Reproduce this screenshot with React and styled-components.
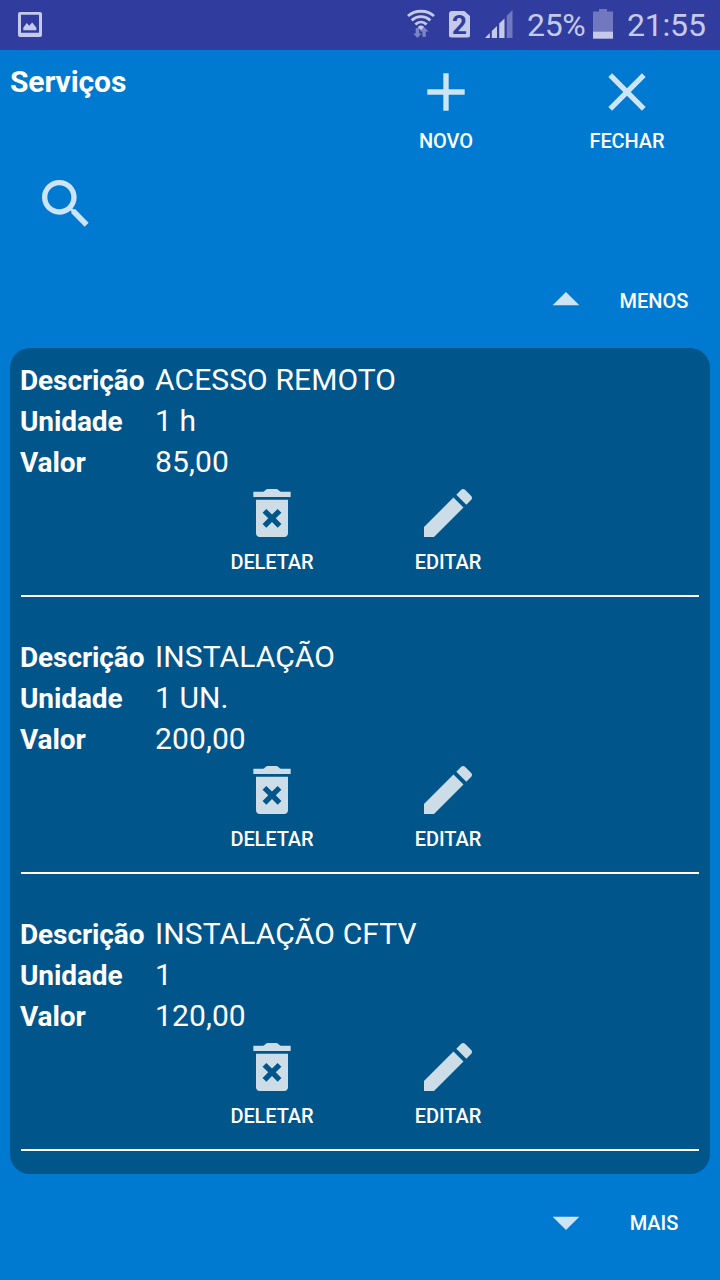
import React from "react";
import styled, { createGlobalStyle } from "styled-components";

const services = [
  { description: "ACESSO REMOTO", unit: "1 h", price: "85,00" },
  { description: "INSTALAÇÃO", unit: "1 UN.", price: "200,00" },
  { description: "INSTALAÇÃO CFTV", unit: "1", price: "120,00" },
];

const paths = {
  add: "M19 13h-6v6h-2v-6H5v-2h6V5h2v6h6z",
  close:
    "M19 6.41L17.59 5 12 10.59 6.41 5 5 6.41 10.59 12 5 17.59 6.41 19 12 13.41 17.59 19 19 17.59 13.41 12z",
  search:
    "M15.5 14h-.79l-.28-.27C15.41 12.59 16 11.11 16 9.5 16 5.91 13.09 3 9.5 3S3 5.91 3 9.5 5.91 16 9.5 16c1.61 0 3.09-.59 4.23-1.57l.27.28v.79l5 4.99L20.49 19l-4.99-5zm-6 0C7.01 14 5 11.99 5 9.5S7.01 5 9.5 5 14 7.01 14 9.5 11.99 14 9.5 14z",
  up: "M7 14l5-5 5 5z",
  down: "M7 10l5 5 5-5z",
  trash:
    "M5 4h3.7c.6 0 .9-1 1.6-1h3.4c.7 0 1 1 1.6 1H19v2H5zM6 7h12v12.6c0 .8-.6 1.4-1.4 1.4H7.4c-.8 0-1.4-.6-1.4-1.4zM8.46 11.88L10.59 14l-2.12 2.12 1.41 1.41L12 15.41l2.12 2.12 1.41-1.41L13.41 14l2.12-2.12-1.41-1.41L12 12.59l-2.13-2.12z",
  edit: "M3 17.25V21h3.75L17.81 9.94l-3.75-3.75L3 17.25zM20.71 7.04c.39-.39.39-1.02 0-1.41l-2.34-2.34c-.39-.39-1.02-.39-1.41 0l-1.83 1.83 3.75 3.75 1.83-1.83z",
};

function Icon({ name }) {
  return (
    <IconSvg viewBox="0 0 24 24">
      <path fillRule="evenodd" d={paths[name]} />
    </IconSvg>
  );
}

function Action({ icon, children }) {
  return (
    <ActionButton>
      <Icon name={icon} />
      <Caption>{children}</Caption>
    </ActionButton>
  );
}

function StatusBar() {
  return (
    <Status>
      <StatusSvg width="24" height="27" viewBox="0 0 24 27">
        <path
          fillRule="evenodd"
          d="M2 0h20a2 2 0 0 1 2 2v21a2 2 0 0 1-2 2H2a2 2 0 0 1-2-2V2a2 2 0 0 1 2-2zM3 2.7v18h18v-18zM5.3 18.2v-2.4L8.8 11l2.4 2.8 3-3.2 4.2 5.2v2.4z"
        />
      </StatusSvg>
      <StatusRight>
        <StatusSvg width="28" height="30" viewBox="0 0 28 30">
          <g fill="none" stroke="#c6caea" strokeWidth="2.9">
            <path d="M1 7C8 .6 20 .6 27 7" />
            <path d="M4.7 11.4c5.4-5 13.2-5 18.6 0" />
            <path d="M8.4 15.5c3.3-3.2 7.9-3.2 11.2 0" />
          </g>
          <path d="M10.8 18q3.2-2.8 6.4 0L14 21.4z" />
          <path
            fill="#7d84c6"
            d="M8.7 19h3.4v5.4h2.5L10.4 29l-4.2-4.6h2.5zM15.4 27.8v-5.2h-2.5l4.2-4.4 4.6 4.4h-2.9v5.2z"
          />
        </StatusSvg>
        <SimBadge>2</SimBadge>
        <StatusSvg width="28" height="28" viewBox="0 0 28 28">
          <path d="M0 28l4.8-5V28zM6.8 21l5.2-5V28H6.8zM14.2 13.4l5.3-5V28h-5.3z" />
          <path fill="#7178bf" d="M21.8 5.8L27.5 0v28h-5.7z" />
        </StatusSvg>
        <Percent>25%</Percent>
        <StatusSvg width="20" height="30" viewBox="0 0 20 30">
          <path fill="#7178bf" d="M0 2.5h6V0h8v2.5h6V23H0z" />
          <path d="M0 22.7h20V29.7H0z" />
        </StatusSvg>
        <Clock>21:55</Clock>
      </StatusRight>
    </Status>
  );
}

function App() {
  return (
    <Screen>
      <GlobalStyle />
      <StatusBar />
      <Header>
        <Title>Serviços</Title>
        <HeaderActions>
          <Action icon="add">NOVO</Action>
          <Action icon="close">FECHAR</Action>
        </HeaderActions>
      </Header>
      <SearchButton>
        <Icon name="search" />
      </SearchButton>
      <Pager>
        <Icon name="up" />
        <PagerText>MENOS</PagerText>
      </Pager>
      <Panel>
        {services.map((service) => (
          <Service key={service.description}>
            <Label>Descrição</Label>
            <Value>{service.description}</Value>
            <Label>Unidade</Label>
            <Value>{service.unit}</Value>
            <Label>Valor</Label>
            <Value>{service.price}</Value>
            <ServiceActions>
              <Action icon="trash">DELETAR</Action>
              <Action icon="edit">EDITAR</Action>
            </ServiceActions>
          </Service>
        ))}
      </Panel>
      <Pager $bottom>
        <Icon name="down" />
        <PagerText>MAIS</PagerText>
      </Pager>
    </Screen>
  );
}

export default App;

const GlobalStyle = createGlobalStyle`
  * {
    box-sizing: border-box;
  }

  body {
    margin: 0;
    background-color: #007ad0;
    font-family: Roboto, sans-serif;
  }
`;

const Screen = styled.div`
  width: 720px;
  height: 1280px;
  overflow: hidden;
  color: white;
  background-color: #007ad0;
`;

const Status = styled.div`
  height: 50px;
  display: flex;
  justify-content: space-between;
  padding: 0 14px 0 18px;
  align-items: center;
  color: #c6caea;
  background-color: #303d9f;
`;

const StatusSvg = styled.svg`
  display: block;
  flex: none;
  fill: #c6caea;
`;

const StatusRight = styled.div`
  display: flex;
  align-items: center;
  height: 48px;
  margin-bottom: 2px;
`;

const SimBadge = styled.div`
  width: 21px;
  height: 27px;
  margin: 0 15px 0 14px;
  border-radius: 3px;
  clip-path: polygon(0 0, 70% 0, 100% 20%, 100% 100%, 0 100%);
  background-color: #c6caea;
  color: #303d9f;
  font-size: 26px;
  font-weight: bold;
  line-height: 28px;
  text-align: center;
`;

const Percent = styled.div`
  width: 59px;
  margin: 2px 7px 0 14px;
  font-size: 32px;
  letter-spacing: -0.3px;
  white-space: nowrap;
`;

const Clock = styled.div`
  width: 79px;
  margin: 2px 0 0 14px;
  font-size: 32px;
  letter-spacing: -0.2px;
  white-space: nowrap;
`;

const Header = styled.header`
  height: 122px;
  display: flex;
  justify-content: space-between;
  padding: 10px 13px 0 10px;
`;

const Title = styled.h1`
  margin: 4px 0 0;
  font-size: 30px;
  font-weight: bold;
  letter-spacing: -0.1px;
  line-height: 36px;
`;

const HeaderActions = styled.div`
  display: flex;
  gap: 21px;
`;

const IconSvg = styled.svg`
  display: block;
  flex: none;
  width: 64px;
  height: 64px;
  fill: rgba(255, 255, 255, 0.8);
`;

const ActionButton = styled.button`
  width: 160px;
  height: 93px;
  display: flex;
  flex-direction: column;
  align-items: center;
  padding: 0;
  border: 0;
  background: none;
  color: white;
  font-family: inherit;
`;

const Caption = styled.span`
  margin-top: 5px;
  font-size: 20px;
  font-weight: 500;
  letter-spacing: -0.1px;
  line-height: 24px;
`;

const SearchButton = styled.button`
  display: block;
  margin-left: 34px;
  padding: 0;
  border: 0;
  background: none;
`;

const Pager = styled.div`
  height: 64px;
  display: flex;
  align-items: center;
  margin: ${(props) => (props.$bottom ? "16px" : "32px")} 10px 0 534px;
`;

const PagerText = styled.div`
  flex: 1;
  padding-top: 2px;
  text-align: center;
  font-size: 20px;
  font-weight: 500;
  line-height: 24px;
`;

const Panel = styled.main`
  height: 826px;
  margin: 16px 10px 0;
  padding: 12px 11px 0;
  border-radius: 20px;
  background-color: #00558b;
`;

const Service = styled.section`
  height: 237px;
  display: grid;
  grid-template-columns: 134px 1fr;
  grid-template-rows: 41px 41px 41px 1fr;
  margin-bottom: 40px;
  border-bottom: 2px solid white;
`;

const Label = styled.div`
  margin-left: -1px;
  font-size: 28px;
  font-weight: bold;
  letter-spacing: -0.1px;
  line-height: 41px;
  white-space: nowrap;
`;

const Value = styled.div`
  font-size: 30px;
  letter-spacing: 0.1px;
  line-height: 40px;
  white-space: nowrap;
`;

const ServiceActions = styled.div`
  grid-column: 1 / 3;
  display: flex;
  gap: 16px;
  margin: -2px 0 0 171px;
`;
